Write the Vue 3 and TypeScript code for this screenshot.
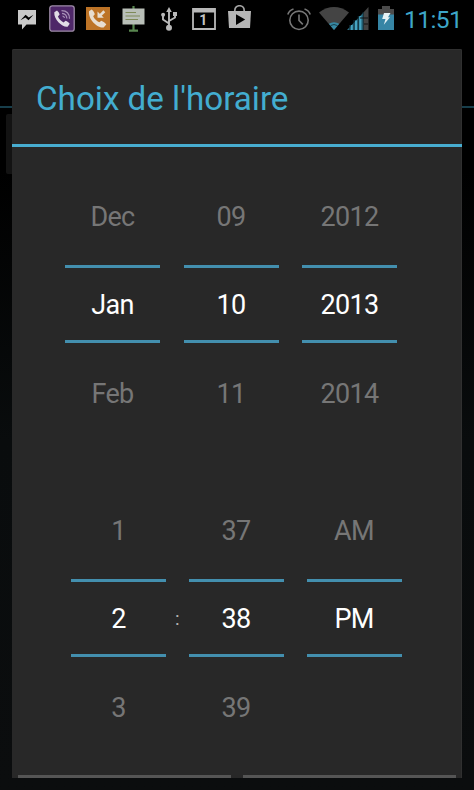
<script setup lang="ts">
interface PickerColumn {
  previous: string
  current: string
  next: string
}

const title = "Choix de l'horaire"
const clock = '11:51'

const dateColumns: PickerColumn[] = [
  { previous: 'Dec', current: 'Jan', next: 'Feb' },
  { previous: '09', current: '10', next: '11' },
  { previous: '2012', current: '2013', next: '2014' },
]

const timeColumns: PickerColumn[] = [
  { previous: '1', current: '2', next: '3' },
  { previous: '37', current: '38', next: '39' },
  { previous: 'AM', current: 'PM', next: '' },
]
</script>

<template>
  <div class="screen">
    <div class="backdrop">
      <div class="backdrop-line"></div>
      <div class="backdrop-card"></div>
    </div>

    <header class="status-bar">
      <div class="notifications">
        <svg class="icon messenger" width="18" height="20" viewBox="0 0 18 20">
          <path d="M0 0H18V14.5H8.5L4 19.5V14.5H0Z" fill="#c9c9c9" />
          <path d="M2.5 10.3L7.6 4.8L10.8 7.5L15.5 4.8L10.5 10.3L7.4 7.6Z" fill="#000" />
        </svg>
        <svg class="icon viber" width="26" height="27" viewBox="0 0 26 27">
          <rect x=".8" y=".8" width="24.4" height="25.4" rx="2.5" fill="#4e2768" stroke="#9c8ba5" stroke-width="1.3" />
          <path d="M5.3 7.2L8 5.6C9.3 6.7 10.3 8.1 10.6 9.6L8.9 11.5C10.2 14.2 12.1 16.2 14.6 17.4L16.5 15.8C18.3 16.4 19.7 17.4 20.7 18.7L18.6 21.7C14.1 22.9 4.6 14.8 5.3 7.2Z" fill="#e1dce5" />
          <path d="M12.5 5.6C17.5 5.7 20.5 8.7 20.5 13.8M13 8.4C16.1 8.7 17.8 10.6 17.9 13.5M13.5 11Q15.2 11.4 15.5 13" fill="none" stroke="#a991b8" stroke-width="1.2" />
        </svg>
        <svg class="icon missed" width="24" height="23" viewBox="0 0 24 23">
          <rect width="24" height="23" fill="#bd7326" />
          <path d="M3 4.2L5.6 2.6C7.4 4 8.5 5.6 8.8 7.3L7.2 9.2C8.4 11.9 10.6 14 13.3 15.2L15.3 13.7C17.4 14.4 19.1 15.7 20.3 17.4L17.6 20.5C11.5 21.1 2.1 12.8 3 4.2Z" fill="#e7ddd0" />
          <path d="M18.3 4.3L13.5 9.1" fill="none" stroke="#e7ddd0" stroke-width="2.7" />
          <path d="M11.5 4.5V10.8H17.8Z" fill="#e7ddd0" />
        </svg>
        <svg class="icon board" width="23" height="26" viewBox="0 0 23 26">
          <path d="M11.5 0V3M11.5 18V24M7 24.7H16" stroke="#58864f" stroke-width="2.2" />
          <rect x=".5" y="2.5" width="22" height="16" fill="#b9bfb8" />
          <path d="M3.5 6.5H14M3.5 10H18M3.5 13.5H16" stroke="#7e8a58" stroke-width="1.2" />
        </svg>
        <svg class="icon usb" width="16" height="24" viewBox="0 0 16 24">
          <path d="M8 3V20M8 16.5L2 12.5V8M8 14L14 10.5V7" fill="none" stroke="#b8b8b8" stroke-width="1.9" />
          <path d="M8 0L10.8 5H5.2Z" fill="#b8b8b8" />
          <circle cx="8" cy="20.7" r="3" fill="#b8b8b8" />
          <circle cx="2.1" cy="7.8" r="2" fill="#b8b8b8" />
          <rect x="12" y="5" width="4" height="4" fill="#b8b8b8" />
        </svg>
        <svg class="icon calendar" width="24" height="22" viewBox="0 0 24 22">
          <path d="M1 1H23V21H1Z" fill="none" stroke="#b8b8b8" stroke-width="1.8" />
          <path d="M1 1H23V4.5H1Z" fill="#b8b8b8" />
          <text x="11.3" y="17.2" text-anchor="middle">1</text>
        </svg>
        <svg class="icon store" width="23" height="24" viewBox="0 0 23 24">
          <path d="M6.8 7V5.5C6.8-.8 16.2-.8 16.2 5.5V7" fill="none" stroke="#a4a4a4" stroke-width="1.7" />
          <path d="M0 6H23L22 23H1Z" fill="#b5b5b5" />
          <path d="M8 9.2V20L17.2 14.6Z" fill="#000" />
        </svg>
      </div>

      <div class="indicators">
        <svg class="icon alarm" width="24" height="23" viewBox="0 0 24 23">
          <circle cx="12" cy="12.3" r="9.2" fill="none" stroke="#777" stroke-width="1.6" />
          <path d="M12 6.5V12.5L15.8 16.4M.8 6.5C1.7 3.7 3.7 1.8 6.5 1M17.5 1C20.3 1.8 22.3 3.7 23.2 6.5" fill="none" stroke="#777" stroke-width="1.6" />
        </svg>
        <svg class="icon wifi" width="30" height="23" viewBox="0 0 30 23">
          <path d="M0 5.4Q15-5.4 30 5.4L15 23Z" fill="#444" />
          <path d="M9.8 16.8Q15 13.5 20.2 16.8L15 23Z" fill="#3689a4" />
          <path d="M11.5 18.6Q15 16.4 18.5 18.6" fill="none" stroke="#183f4c" stroke-width="1" />
        </svg>
        <svg class="icon signal" width="22" height="23" viewBox="0 0 22 23">
          <path d="M0 23L16 6V23Z" fill="#286d84" />
          <path d="M4.7 23V18M9 23V13.5M13.3 23V9" stroke="#47a5c2" stroke-width="2" />
          <path d="M16 6L21.5 0V23H16Z" fill="#444" />
          <path d="M2.8 23V18M7 23V13M11.3 23V9M16.2 23V5" stroke="#102e38" stroke-width="1" />
          <path d="M13 11H21M17 17H21" stroke="#111" stroke-width="1" />
        </svg>
        <svg class="icon battery" width="16" height="24" viewBox="0 0 16 24">
          <path d="M0 3H4V0H12V3H16V24H0Z" fill="#4b4b4b" />
          <path d="M0 8.5H16V24H0Z" fill="#3685a5" />
          <path d="M6 7H12.5L10 11.2H12L5.8 18.7L7.5 13H4.2Z" fill="#e5f2f5" />
        </svg>
        <span class="clock">{{ clock }}</span>
      </div>
    </header>

    <main class="dialog">
      <h1 class="title">{{ title }}</h1>
      <section class="picker date">
        <div v-for="column in dateColumns" :key="column.current" class="column">
          <span class="value muted">{{ column.previous }}</span>
          <span class="value selected">{{ column.current }}</span>
          <span class="value muted">{{ column.next }}</span>
        </div>
      </section>
      <section class="picker time">
        <template v-for="(column, index) in timeColumns" :key="column.current">
          <div class="column">
            <span class="value muted">{{ column.previous }}</span>
            <span class="value selected">{{ column.current }}</span>
            <span class="value muted">{{ column.next }}</span>
          </div>
          <span v-if="index === 0" class="separator">:</span>
        </template>
      </section>
      <footer class="button-edges">
        <span class="edge"></span>
        <span class="edge"></span>
      </footer>
    </main>
  </div>
</template>

<style>
body {
  margin: 0;
  background: #000;
}
</style>

<style scoped>
.screen {
  position: relative;
  width: 474px;
  height: 790px;
  overflow: hidden;
  background: linear-gradient(#000 0 170px, #090c0d 440px, #0b0d0e);
  font-family: Roboto, "Liberation Sans", sans-serif;
}

.backdrop {
  position: absolute;
  inset: 0;
  padding-top: 106px;
}

.backdrop-line {
  height: 2px;
  background: #173e4b;
}

.backdrop-card {
  height: 60px;
  margin: 6px 6px 0;
  border-radius: 2px;
  background: linear-gradient(90deg, #131313 50%, #000 50%);
}

.status-bar {
  position: relative;
  display: flex;
  justify-content: space-between;
  height: 49px;
  box-sizing: border-box;
  padding: 0 11px 0 18px;
}

.notifications,
.indicators {
  display: flex;
  align-items: flex-start;
  padding-top: 5px;
}

.icon {
  flex: none;
  display: block;
}

.messenger { margin-top: 5px; }
.viber { margin-left: 13px; }
.missed { margin: 2px 0 0 11px; }
.board { margin: 1px 0 0 12px; }
.usb { margin: 2px 0 0 16px; }
.calendar { margin: 3px 0 0 15px; }
.store { margin-left: 12px; }

.calendar text {
  fill: #c4c4c4;
  font-size: 14px;
  font-weight: 700;
}

.alarm { margin-top: 3px; }
.wifi { margin: 2px 0 0 8px; }
.signal { margin: 2px 0 0 -2px; }
.battery { margin: 1px 0 0 9px; }

.clock {
  width: 59px;
  margin-left: 10px;
  color: #3da6c8;
  font-size: 24.5px;
  letter-spacing: -0.55px;
  line-height: 30px;
  white-space: nowrap;
}

.dialog {
  position: relative;
  display: flex;
  flex-direction: column;
  width: 450px;
  height: 729px;
  margin: 0 auto;
  border-radius: 2px 2px 0 0;
  background: #282828;
  box-shadow: inset 0 1px #303030, inset -1px 0 #303030;
}

.title {
  height: 98px;
  box-sizing: border-box;
  margin: 0;
  padding-left: 24px;
  border-bottom: 3px solid #48add0;
  color: #43add0;
  font-size: 33.2px;
  font-weight: 400;
  line-height: 100px;
  white-space: nowrap;
}

.picker {
  display: flex;
}

.date {
  gap: 23.5px;
  height: 284px;
  padding: 30px 0 0 53px;
}

.time {
  height: 254px;
  padding: 30px 0 0 59px;
}

.column {
  display: flex;
  flex-direction: column;
  width: 95px;
}

.time .column:last-child {
  margin-left: 23px;
}

.value {
  display: block;
  height: 78px;
  color: #767676;
  font-size: 27px;
  letter-spacing: -0.7px;
  line-height: 80px;
  text-align: center;
}

.value.muted:first-child {
  height: 88px;
}

.value.selected {
  box-sizing: border-box;
  border-top: 3px solid #438fae;
  border-bottom: 3px solid #438fae;
  color: #fff;
  line-height: 75px;
}

.value.muted:last-child {
  line-height: 103px;
}

.separator {
  width: 22.5px;
  padding-top: 88px;
  color: #b5b5b5;
  font-size: 19px;
  line-height: 80px;
  text-align: center;
}

.button-edges {
  display: flex;
  gap: 12px;
  margin-top: auto;
  padding: 0 6px;
}

.edge {
  flex: 1;
  height: 3px;
  background: #555;
}
</style>
